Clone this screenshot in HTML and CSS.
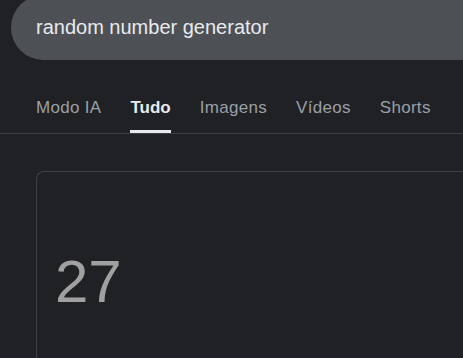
FILE: index.html
```html
<!DOCTYPE html>
<html lang="pt">
<head>
<meta charset="utf-8">
<title>random number generator</title>
<link rel="stylesheet" href="styles.css">
</head>
<body>
<div class="search"><span class="query">random number generator</span></div>
<nav class="tabs">
  <span class="tab">Modo IA</span>
  <span class="tab active">Tudo</span>
  <span class="tab">Imagens</span>
  <span class="tab">Vídeos</span>
  <span class="tab">Shorts</span>
</nav>
<section class="card">
  <div class="number">27</div>
</section>
</body>
</html>
```
FILE: styles.css
```css
html, body {
  margin: 0;
  padding: 0;
  background: #202124;
  overflow: hidden;
  height: 100%;
}
body {
  font-family: "Liberation Sans", Arial, sans-serif;
}
.search {
  margin: -5px 0 0 11px;
  height: 65px;
  background: #4d5156;
  border-radius: 33px 0 0 33px;
  display: flex;
  align-items: center;
  padding-left: 25px;
}
.query {
  font-size: 20px;
  color: #e8eaed;
}
.tabs {
  display: flex;
  gap: 29px;
  padding-left: 36px;
  border-bottom: 1px solid #3c4043;
}
.tab {
  font-size: 17px;
  line-height: 20px;
  letter-spacing: 0.3px;
  padding: 38px 0 12px;
  border-bottom: 3px solid transparent;
  color: #9aa0a6;
}
.tab.active {
  color: #e8eaed;
  font-weight: bold;
  letter-spacing: 0;
  border-bottom-color: #e8eaed;
}
.card {
  margin: 37px 0 0 36px;
  height: 400px;
  border: 1px solid #3c4043;
  border-right: none;
  border-radius: 8px 0 0 0;
  padding: 75px 0 0 18px;
}
.number {
  font-size: 60px;
  color: #a0a0a0;
}
```
